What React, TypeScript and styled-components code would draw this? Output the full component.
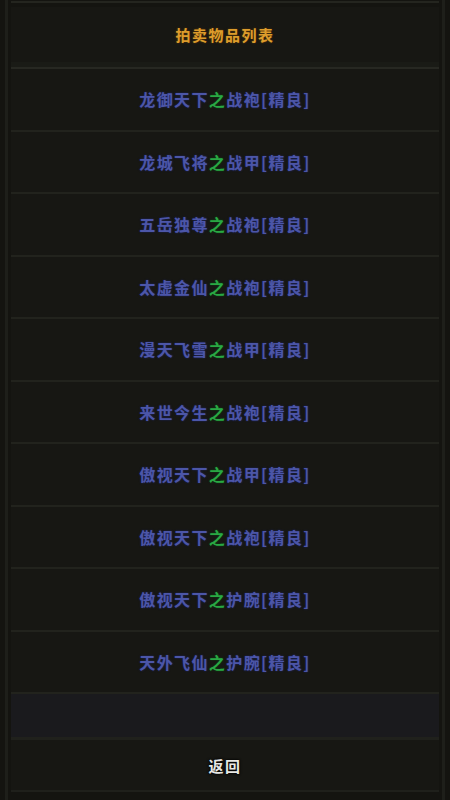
import React from "react";
import styled, { createGlobalStyle } from "styled-components";

const Global = createGlobalStyle`
  html, body { margin: 0; padding: 0; background: #141410; }
  body { font-family: "Noto Sans CJK SC", "Noto Sans", sans-serif; }
`;

const Page = styled.div`
  width: 450px;
  height: 800px;
  box-sizing: border-box;
  padding: 0 5px;
  background: #141410;
  overflow: hidden;
`;

const Frame = styled.div`
  height: 100%;
  box-sizing: border-box;
  border-left: 3px solid #1e1f1a;
  border-right: 3px solid #1e1f1a;
  padding: 0 3px;
  display: flex;
  flex-direction: column;
`;

const TopStrip = styled.div`
  height: 2px;
  margin-top: 1px;
  margin-bottom: 4px;
  background: #24251f;
`;

const Header = styled.div`
  height: 55px;
  background: #171713;
  display: flex;
  align-items: center;
  justify-content: center;
  color: #dc9c2c;
  font-size: 15px;
  font-weight: 700;
  letter-spacing: 1.5px;
  text-shadow: 0 0 2px rgba(120, 70, 0, 0.8);
`;

const Band = styled.div`
  height: 7px;
  box-sizing: border-box;
  background: #1a1b16;
  border-bottom: 2px solid #272822;
`;

const List = styled.div`
  display: flex;
  flex-direction: column;
`;

const Row = styled.div`
  height: 62.5px;
  flex-shrink: 0;
  box-sizing: border-box;
  background: #171713;
  border-bottom: 2px solid #22231d;
  display: flex;
  align-items: center;
  justify-content: center;
  font-size: 16px;
  font-weight: 700;
  letter-spacing: 1.4px;
  color: #4c56a8;
  text-shadow: 0 0 2px rgba(30, 40, 120, 0.9);
`;

const Green = styled.span`
  color: #2aa844;
  text-shadow: 0 0 2px rgba(10, 80, 20, 0.9);
`;

const Empty = styled.div`
  height: 46px;
  flex-shrink: 0;
  box-sizing: border-box;
  background: #1a1a1d;
  border-bottom: 3px solid #20211c;
`;

const ReturnRow = styled.div`
  height: 50px;
  flex-shrink: 0;
  background: #171713;
  display: flex;
  align-items: center;
  justify-content: center;
  color: #e8e8e4;
  font-size: 15px;
  font-weight: 700;
  letter-spacing: 1.5px;
  text-shadow: 0 0 2px #000, 0 0 3px #000;
`;

const BottomStrip = styled.div`
  flex: 1;
  background: #141410;
  border-top: 2px solid #1f201b;
`;

const items: [string, string][] = [
  ["龙御天下", "战袍"],
  ["龙城飞将", "战甲"],
  ["五岳独尊", "战袍"],
  ["太虚金仙", "战袍"],
  ["漫天飞雪", "战甲"],
  ["来世今生", "战袍"],
  ["傲视天下", "战甲"],
  ["傲视天下", "战袍"],
  ["傲视天下", "护腕"],
  ["天外飞仙", "护腕"],
];

export default function App() {
  return (
    <>
      <Global />
      <Page>
        <Frame>
          <TopStrip />
          <Header>拍卖物品列表</Header>
          <Band />
          <List>
            {items.map(([a, b], i) => (
              <Row key={i}>
                {a}
                <Green>之</Green>
                {b}[精良]
              </Row>
            ))}
          </List>
          <Empty />
          <ReturnRow>返回</ReturnRow>
          <BottomStrip />
        </Frame>
      </Page>
    </>
  );
}
